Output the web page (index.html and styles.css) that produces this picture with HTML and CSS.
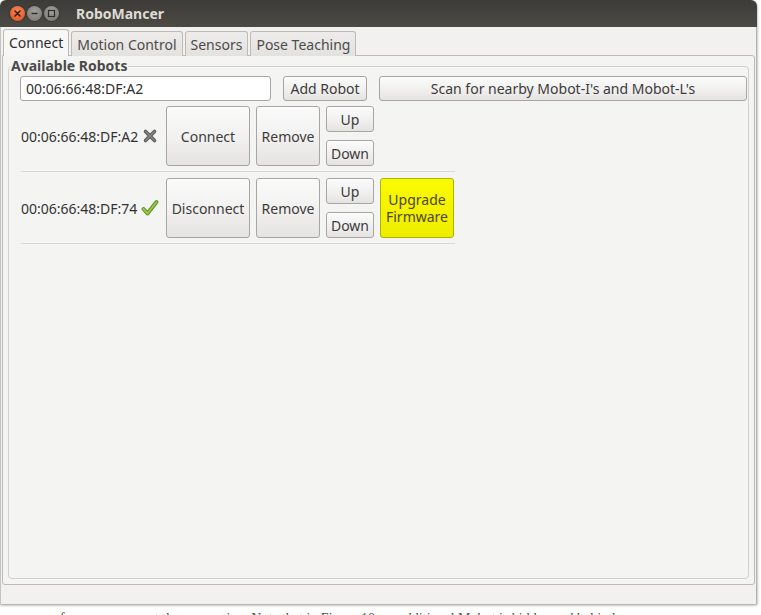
FILE: index.html
```html
<!DOCTYPE html>
<html>
<head>
<meta charset="utf-8">
<link rel="stylesheet" href="styles.css">
</head>
<body>
<div class="desk">
  <div class="window">
    <div class="titlebar">
      <div class="wbtns">
        <span class="wbtn close"><svg width="15" height="15" viewBox="0 0 15 15"><path d="M5 5 L10 10 M10 5 L5 10" stroke="#3a1a0c" stroke-width="1.6" stroke-linecap="round"/></svg></span>
        <span class="wbtn"><svg width="15" height="15" viewBox="0 0 15 15"><path d="M4.5 7.5 H10.5" stroke="#2f2e2b" stroke-width="1.4"/></svg></span>
        <span class="wbtn"><svg width="15" height="15" viewBox="0 0 15 15"><rect x="4.5" y="4.5" width="6" height="6" fill="none" stroke="#2f2e2b" stroke-width="1.2"/></svg></span>
      </div>
      <div class="title">RoboMancer</div>
    </div>
    <div class="client">
      <div class="tabs">
        <div class="tab active">Connect</div>
        <div class="tab">Motion Control</div>
        <div class="tab">Sensors</div>
        <div class="tab">Pose Teaching</div>
      </div>
      <div class="page">
        <div class="frame">
          <div class="legend">Available Robots</div>
          <div class="addrow">
            <div class="entry">00:06:66:48:DF:A2</div>
            <div class="btn addbtn">Add Robot</div>
            <div class="btn scanbtn">Scan for nearby Mobot-I's and Mobot-L's</div>
          </div>
          <div class="robots">
            <div class="robot">
              <div class="addr"><span>00:06:66:48:DF:A2</span><svg class="status" width="16" height="16" viewBox="0 0 16 16"><path d="M3.5 3.5 L12.5 12.5 M12.5 3.5 L3.5 12.5" stroke="#5a5a5a" stroke-width="3.6" stroke-linecap="round"/><path d="M3.5 3.5 L12.5 12.5 M12.5 3.5 L3.5 12.5" stroke="#8a8a8a" stroke-width="1.4" stroke-linecap="round"/></svg></div>
              <div class="btn big conn">Connect</div>
              <div class="btn big rem">Remove</div>
              <div class="updown">
                <div class="btn small">Up</div>
                <div class="btn small">Down</div>
              </div>
            </div>
            <div class="robot">
              <div class="addr"><span>00:06:66:48:DF:74</span><svg class="status" width="18" height="18" viewBox="0 0 18 18"><path d="M2.5 10 L6.5 14.5 L15.5 3" fill="none" stroke="#5e8a1e" stroke-width="3.8" stroke-linecap="round" stroke-linejoin="round"/><path d="M2.5 10 L6.5 14.5 L15.5 3" fill="none" stroke="#94cc48" stroke-width="2" stroke-linecap="round" stroke-linejoin="round"/></svg></div>
              <div class="btn big conn">Disconnect</div>
              <div class="btn big rem">Remove</div>
              <div class="updown">
                <div class="btn small">Up</div>
                <div class="btn small">Down</div>
              </div>
              <div class="btn big upgrade"><span>Upgrade</span><span>Firmware</span></div>
            </div>
          </div>
        </div>
      </div>
      <div class="statusbar"></div>
    </div>
  </div>
  <div class="behind">for an component the connection. Note that in Figure 10, an additional Mobot is hidden and behind.</div>
</div>
</body>
</html>
```

FILE: styles.css
```css
html, body {
  margin: 0;
  padding: 0;
  background: #ffffff;
  width: 761px;
  height: 615px;
  overflow: hidden;
  font-family: "Noto Sans", "DejaVu Sans", sans-serif;
}
.desk {
  width: 761px;
  height: 615px;
  overflow: hidden;
}
.window {
  width: 757px;
  height: 604px;
  display: flex;
  flex-direction: column;
  border-radius: 6px 6px 0 0;
  overflow: hidden;
  box-shadow: 0 1px 3px rgba(0,0,0,0.45);
}
.titlebar {
  height: 27px;
  flex: none;
  background: linear-gradient(#3c3b37, #4b4a45);
  display: flex;
  align-items: center;
}
.wbtns {
  display: flex;
  gap: 2px;
  padding-left: 10px;
  width: 66px;
}
.wbtn {
  width: 15px;
  height: 15px;
  border-radius: 50%;
  background: radial-gradient(circle at 50% 35%, #a09f9a, #75746f);
  box-shadow: 0 0 0 1px #3a3935;
  display: block;
}
.wbtn svg { display: block; }
.wbtn.close {
  background: radial-gradient(circle at 50% 35%, #f58a5a, #df4a17);
}
.title {
  color: #dfdbd2;
  font-weight: bold;
  font-size: 14px;
}
.client {
  flex: 1;
  background: #f2f1f0;
  display: flex;
  flex-direction: column;
  border-right: 1px solid #b5b3ae;
  border-left: 1px solid #c5c3be;
}
.tabs {
  display: flex;
  align-items: flex-end;
  padding: 2px 0 0 2px;
  height: 29px;
  box-sizing: border-box;
  gap: 2px;
  position: relative;
  z-index: 1;
}
.tab {
  height: 25px;
  box-sizing: border-box;
  padding: 0 5px;
  font-size: 14px;
  color: #4c4c4c;
  background: linear-gradient(#edecea, #e3e2df);
  border: 1px solid #bdbbb6;
  border-bottom: none;
  border-radius: 3px 3px 0 0;
  display: flex;
  align-items: center;
}
.tab.active {
  height: 27px;
  background: #f7f7f6;
  color: #2f2f2f;
  padding-bottom: 1px;
}
.page {
  flex: 1;
  margin: -1px 1px 0 1px;
  border: 1px solid #bdbbb6;
  border-radius: 0 3px 3px 3px;
  background: #f4f4f3;
  padding: 10px 5px 5px 5px;
  display: flex;
  flex-direction: column;
}
.frame {
  flex: 1;
  border: 1px solid #d2d0cc;
  border-radius: 4px;
  position: relative;
  padding: 9px 0 0 11px;
}
.legend {
  position: absolute;
  top: -9px;
  left: 1px;
  background: #f4f4f3;
  padding: 0 1px;
  font-size: 14px;
  font-weight: bold;
  color: #4a4a4a;
  line-height: 16px;
}
.addrow {
  display: flex;
  gap: 12px;
  height: 25px;
  padding-right: 1px;
}
.entry {
  width: 251px;
  box-sizing: border-box;
  background: #fff;
  border: 1px solid #a9a7a3;
  border-radius: 3px;
  font-size: 14px;
  color: #2f2f2f;
  padding-left: 5px;
  display: flex;
  align-items: center;
}
.btn {
  flex: none;
  box-sizing: border-box;
  border: 1px solid #a8a6a2;
  border-radius: 3px;
  background: linear-gradient(#fbfbfb, #f0efee 60%, #e4e3e1);
  font-size: 14px;
  color: #3c3c3c;
  display: flex;
  align-items: center;
  justify-content: center;
  text-align: center;
  box-shadow: inset 0 1px 0 #ffffff;
}
.addbtn { width: 84px; }
.scanbtn { flex: 1; }
.robots {
  width: 434px;
  margin-top: 5px;
  margin-left: 1px;
}
.robot {
  display: flex;
  gap: 6px;
  padding: 0 0 5px 0;
  border-bottom: 1px solid #dad8d5;
  margin-bottom: 6px;
  height: 60px;
}
.addr {
  flex: none;
  width: 139px;
  font-size: 14px;
  color: #333;
  display: flex;
  align-items: center;
  gap: 4px;
  white-space: nowrap;
}
.status { flex: none; }
.big { height: 60px; }
.conn { width: 84px; }
.rem { width: 64px; }
.updown {
  flex: none;
  display: flex;
  flex-direction: column;
  justify-content: space-between;
  width: 48px;
}
.small { height: 26px; }
.upgrade {
  width: 74px;
  flex-direction: column;
  background: linear-gradient(#fafa00, #eded00);
  border-color: #b0b000;
  color: #4f4520;
  line-height: 17px;
  box-shadow: none;
}
.statusbar {
  height: 19px;
  flex: none;
}
.behind {
  margin-top: 2px;
  padding-left: 60px;
  font-family: "Liberation Serif", serif;
  font-size: 14px;
  color: #555;
  white-space: nowrap;
  height: 9px;
  line-height: 26px;
  overflow: hidden;
}
```
